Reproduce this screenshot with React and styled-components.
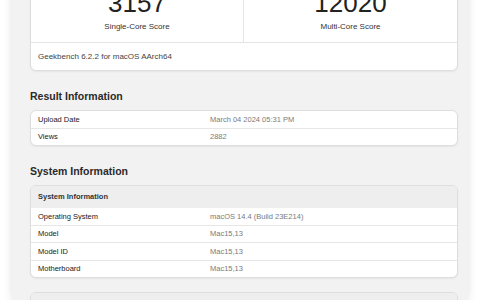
import styled, { createGlobalStyle } from "styled-components";

const GlobalStyle = createGlobalStyle`
  body {
    margin: 0;
    background: #ffffff;
    font-family: "Liberation Sans", Arial, sans-serif;
    overflow: hidden;
  }
`;

const scores = [
  { value: "3157", label: "Single-Core Score" },
  { value: "12020", label: "Multi-Core Score" },
];

const resultInfo = [
  { name: "Upload Date", value: "March 04 2024 05:31 PM" },
  { name: "Views", value: "2882" },
];

const systemInfo = [
  { name: "Operating System", value: "macOS 14.4 (Build 23E214)" },
  { name: "Model", value: "Mac15,13" },
  { name: "Model ID", value: "Mac15,13" },
  { name: "Motherboard", value: "Mac15,13" },
];

const cpuInfo = [
  { name: "Name", value: "Apple M3" },
  { name: "Topology", value: "1 Processor, 8 Cores" },
];

function InfoTable({ title, rows }) {
  return (
    <Card>
      {title && <TableHeader>{title}</TableHeader>}
      {rows.map((row) => (
        <Row key={row.name}>
          <Name>{row.name}</Name>
          <Value>{row.value}</Value>
        </Row>
      ))}
    </Card>
  );
}

export default function App() {
  return (
    <Page>
      <GlobalStyle />
      <Column>
        <Card>
          <ScoreRow>
            {scores.map((s) => (
              <ScoreCell key={s.label}>
                <ScoreNumber>{s.value}</ScoreNumber>
                <ScoreLabel>{s.label}</ScoreLabel>
              </ScoreCell>
            ))}
          </ScoreRow>
          <Footer>Geekbench 6.2.2 for macOS AArch64</Footer>
        </Card>

        <Heading>Result Information</Heading>
        <InfoTable rows={resultInfo} />

        <Heading>System Information</Heading>
        <InfoTable title="System Information" rows={systemInfo} />

        <Spacer />
        <InfoTable title="CPU Information" rows={cpuInfo} />
      </Column>
    </Page>
  );
}

const Page = styled.div`
  display: flex;
  width: 480px;
  height: 300px;
  padding-left: 12px;
  box-sizing: border-box;
`;

const Column = styled.div`
  width: 456px;
  margin-top: -34px;
  padding: 0 10px 0 18px;
  box-sizing: border-box;
  background: #f2f2f2;
  box-shadow: 0 0 9px rgba(0, 0, 0, 0.13);
  display: flex;
  flex-direction: column;
`;

const Card = styled.div`
  background: #ffffff;
  border: 1px solid #dedede;
  border-radius: 6px;
  box-shadow: 0 1px 2px rgba(0, 0, 0, 0.06);
  overflow: hidden;
  flex-shrink: 0;
`;

const ScoreRow = styled.div`
  display: grid;
  grid-template-columns: 1fr 1fr;
  border-bottom: 1px solid #e4e4e4;
`;

const ScoreCell = styled.div`
  display: flex;
  flex-direction: column;
  align-items: center;
  padding: 21px 0 10px;
  &:first-child {
    border-right: 1px solid #e4e4e4;
  }
`;

const ScoreNumber = styled.div`
  font-size: 26px;
  font-weight: 300;
  line-height: 30px;
  color: #222;
`;

const ScoreLabel = styled.div`
  margin-top: 4px;
  font-size: 8px;
  line-height: 10px;
  color: #333;
`;

const Footer = styled.div`
  padding: 0 7px;
  line-height: 27px;
  font-size: 8px;
  color: #444;
`;

const Heading = styled.h2`
  margin: 18px 0 7px;
  font-size: 10.5px;
  line-height: 14px;
  font-weight: 700;
  color: #2a2a2a;
`;

const TableHeader = styled.div`
  background: #eeeeee;
  padding: 0 7px;
  line-height: 22px;
  font-size: 7.5px;
  font-weight: 700;
  color: #333;
`;

const Row = styled.div`
  display: grid;
  grid-template-columns: 172px 1fr;
  padding-left: 7px;
  height: 16.5px;
  align-items: center;
  font-size: 7.5px;
  & + & {
    border-top: 1px solid #e6e6e6;
  }
`;

const Name = styled.div`
  color: #1a1a1a;
`;

const Value = styled.div`
  color: #7a7a7a;
`;

const Spacer = styled.div`
  height: 14px;
  flex-shrink: 0;
`;
